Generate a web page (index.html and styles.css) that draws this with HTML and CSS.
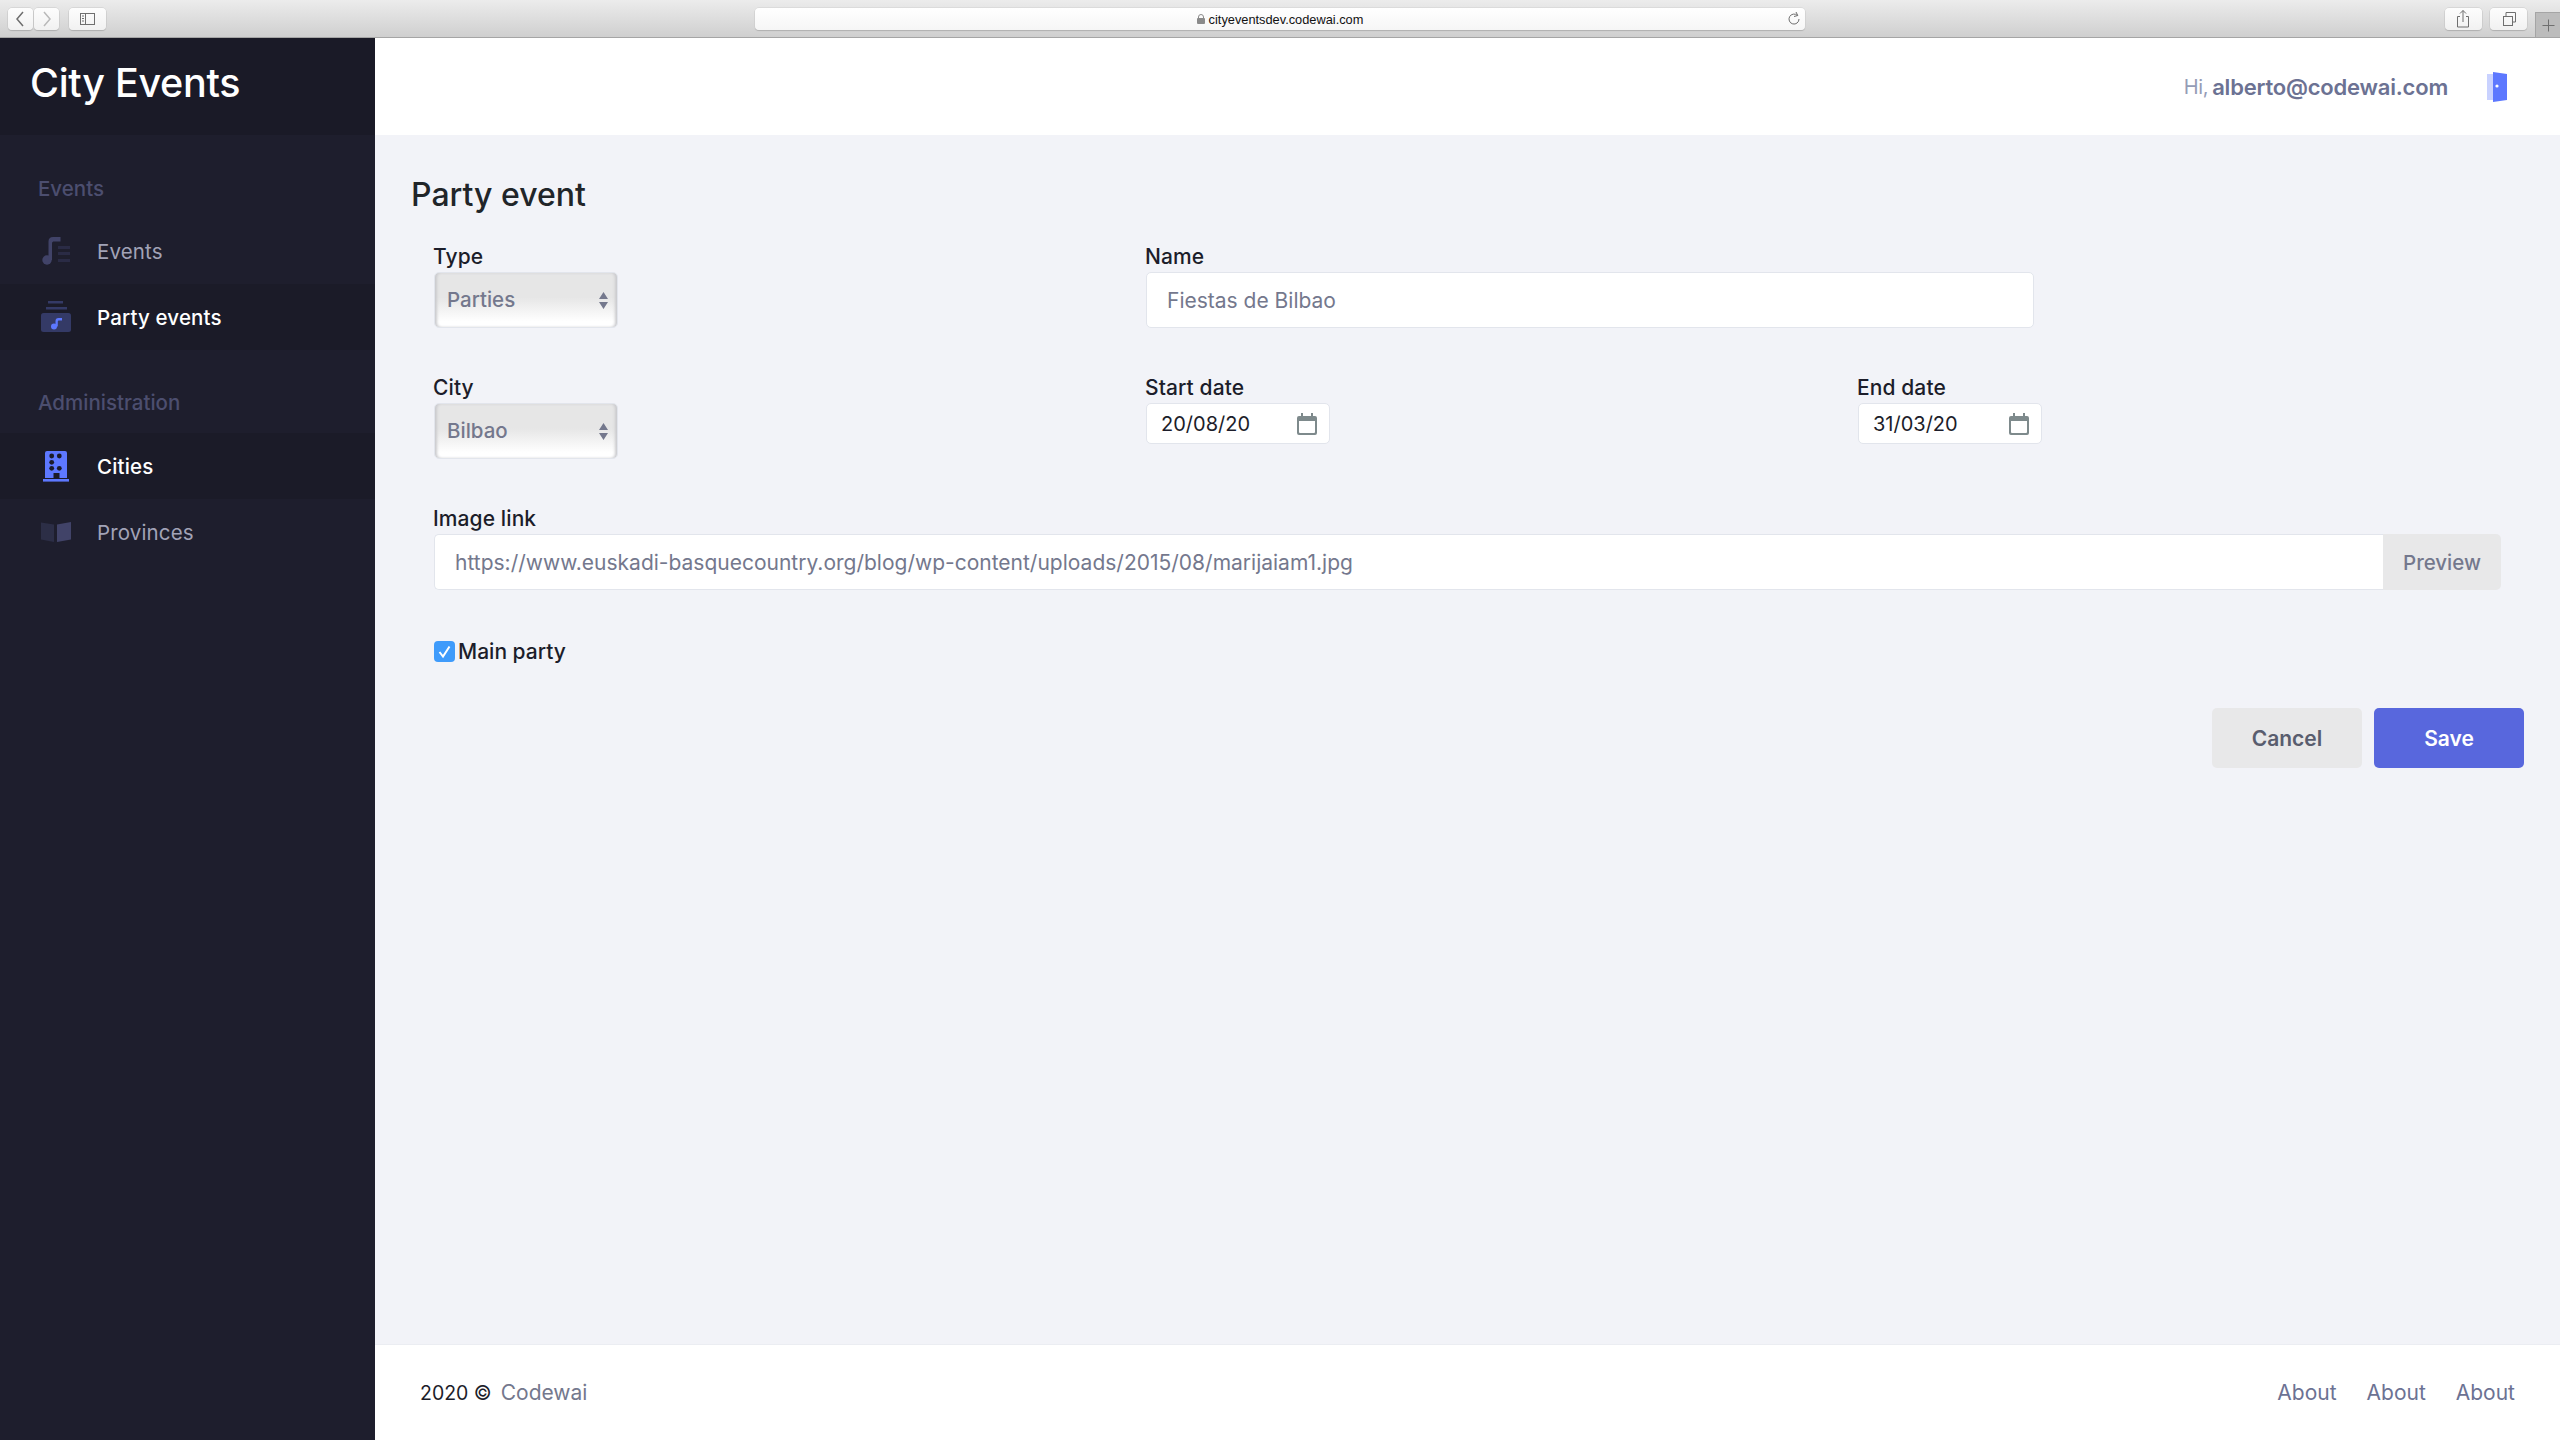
FILE: index.html
```html
<!DOCTYPE html>
<html lang="en">
<head>
<meta charset="utf-8">
<title>City Events</title>
<link rel="stylesheet" href="styles.css">
</head>
<body>
<div class="chrome">
  <div class="chrome-group">
    <div class="cbtn cbtn-nav"><svg width="25" height="22" viewBox="0 0 25 22"><path d="M15 4 L9 11 L15 18" class="cstroke"/></svg></div>
    <div class="cbtn cbtn-nav cbtn-next"><svg width="25" height="22" viewBox="0 0 25 22"><path d="M10 4 L16 11 L10 18" class="cstroke cstroke-dim"/></svg></div>
    <div class="cbtn cbtn-wide cbtn-side"><svg width="37" height="22" viewBox="0 0 37 22"><rect x="11.5" y="5.5" width="14" height="11" class="cthin"/><path d="M16.5 5.5V16.5M13 8H15M13 10.500H15M13 13H15" class="cthin"/></svg></div>
  </div>
  <div class="address">
    <svg class="lock" width="8" height="10" viewBox="0 0 8 10"><path d="M1.500 4.500V3a2.500 2.500 0 0 1 5 0v1.500" class="lock-s"/><rect y="4" width="8" height="6" rx="1" class="lock-f"/></svg>
    <span class="url">cityeventsdev.codewai.com</span>
    <svg class="reload" width="12" height="15" viewBox="0 0 12 15"><path d="M9.500 4.500A5 5 0 1 0 11 8M8 1l1.800 3.500L6 5.500" class="cthin"/></svg>
  </div>
  <div class="chrome-group chrome-right">
    <div class="cbtn cbtn-wide"><svg width="37" height="22" viewBox="0 0 37 22"><path d="M15 8.500H12.500V19H23.500V8.500H21M18 14V2.500M15 5.500L18 2.500L21 5.500" class="cthin"/></svg></div>
    <div class="cbtn cbtn-wide cbtn-tabs"><svg width="37" height="22" viewBox="0 0 37 22"><rect x="13.500" y="8.500" width="9" height="9" class="cthin"/><path d="M16 8V4.500H25.500V14H23" class="cthin"/></svg></div>
    <div class="newtab"><svg width="25" height="25" viewBox="0 0 25 25"><path d="M12.500 6.500V18.500M6.500 12.500H18.500" class="cthin"/></svg></div>
  </div>
</div>
<div class="app">
  <aside class="sidebar">
    <div class="brand">City Events</div>
    <nav class="menu">
      <div class="section section-first">Events</div>
      <a class="item">
        <svg class="ico" viewBox="0 0 32 32"><g class="i-main"><circle cx="7" cy="25" r="4.700"/><path d="M8.500 25V6.500C8.500 3.500 10 2 13 2H20.500V6.500H14C12.800 6.500 12 7 12 8.500V25Z"/></g><g class="i-dim"><rect x="18" y="11" width="12" height="3"/><rect x="18" y="17" width="12" height="3"/><rect x="18" y="24" width="12" height="3"/></g></svg>
        <span>Events</span>
      </a>
      <a class="item active">
        <svg class="ico" viewBox="0 0 32 32"><g class="i-soft"><rect x="8" y="0" width="15" height="2.500"/><rect x="6" y="6" width="21" height="2.500"/><rect x="1" y="12" width="30" height="19" rx="2.500"/></g><g class="i-blue"><circle cx="14" cy="25.500" r="3"/><path d="M15.500 25.500V20C15.500 18 16.500 17 18.500 17H22V19.500H19C18 19.500 17.800 20 17.800 21V25.500Z"/></g></svg>
        <span>Party events</span>
      </a>
      <div class="section">Administration</div>
      <a class="item active">
        <svg class="ico" viewBox="0 0 32 32"><g class="i-blue"><path d="M7 1H25A2 2 0 0 1 27 3V28H19.500V23H13.500V28H5V3A2 2 0 0 1 7 1Z"/><rect x="3" y="29" width="26" height="2.600"/></g><g class="i-hole"><circle cx="11.700" cy="6" r="2.400"/><circle cx="19.300" cy="6" r="2.400"/><circle cx="11.700" cy="12.300" r="2.400"/><circle cx="11.700" cy="18.300" r="2.400"/><circle cx="19.300" cy="18.300" r="2.400"/></g></svg>
        <span>Cities</span>
      </a>
      <a class="item">
        <svg class="ico" viewBox="0 0 32 32"><path class="i-book-l" d="M1 6.500L14 8.500V26L1 23.500Z"/><path class="i-book-r" d="M17 8.500L31 6V23.500L17 26Z"/></svg>
        <span>Provinces</span>
      </a>
    </nav>
  </aside>
  <main class="main">
    <header class="topbar">
      <span class="hi">Hi,</span>
      <span class="email">alberto@codewai.com</span>
      <svg class="door" width="20" height="30" viewBox="0 0 20 30"><rect x="0" y="2" width="7" height="26" class="door-back"/><path d="M6 0L20 2V28L6 30Z" class="door-front"/><circle cx="10" cy="14" r="1.600" class="door-knob"/></svg>
    </header>
    <section class="content">
      <h1 class="title">Party event</h1>
      <div class="form">
        <div class="field">
          <div class="label">Type</div>
          <div class="select"><span>Parties</span><svg class="updown" width="9" height="17" viewBox="0 0 9 17"><path d="M4.500 0L9 7H0ZM0 10H9L4.500 17Z"/></svg></div>
        </div>
        <div class="field field-name">
          <div class="label">Name</div>
          <div class="input">Fiestas de Bilbao</div>
        </div>
        <div class="field-spacer"></div>
        <div class="field">
          <div class="label">City</div>
          <div class="select"><span>Bilbao</span><svg class="updown" width="9" height="17" viewBox="0 0 9 17"><path d="M4.500 0L9 7H0ZM0 10H9L4.500 17Z"/></svg></div>
        </div>
        <div class="field">
          <div class="label">Start date</div>
          <div class="date"><span>20/08/20</span><svg class="cal" width="20" height="22" viewBox="0 0 20 22"><path d="M4 0H6V3H14V0H16V3H18A2 2 0 0 1 20 5V20A2 2 0 0 1 18 22H2A2 2 0 0 1 0 20V5A2 2 0 0 1 2 3H4ZM2 8V19A1 1 0 0 0 3 20H17A1 1 0 0 0 18 19V8Z"/></svg></div>
        </div>
        <div class="field">
          <div class="label">End date</div>
          <div class="date"><span>31/03/20</span><svg class="cal" width="20" height="22" viewBox="0 0 20 22"><path d="M4 0H6V3H14V0H16V3H18A2 2 0 0 1 20 5V20A2 2 0 0 1 18 22H2A2 2 0 0 1 0 20V5A2 2 0 0 1 2 3H4ZM2 8V19A1 1 0 0 0 3 20H17A1 1 0 0 0 18 19V8Z"/></svg></div>
        </div>
        <div class="field field-full">
          <div class="label">Image link</div>
          <div class="group">
            <div class="input input-grow">https://www.euskadi-basquecountry.org/blog/wp-content/uploads/2015/08/marijaiam1.jpg</div>
            <div class="addon">Preview</div>
          </div>
        </div>
      </div>
      <div class="check-row">
        <svg class="check" width="21" height="21" viewBox="0 0 21 21"><rect width="21" height="21" rx="4" class="check-box"/><path d="M5.500 11L9 15.500L15.500 5.500" class="check-mark"/></svg>
        <span>Main party</span>
      </div>
      <div class="actions">
        <div class="btn btn-cancel">Cancel</div>
        <div class="btn btn-save">Save</div>
      </div>
    </section>
    <footer class="footer">
      <div class="copy"><span class="year">2020 ©</span><span class="owner">Codewai</span></div>
      <div class="links"><span>About</span><span>About</span><span>About</span></div>
    </footer>
  </main>
</div>
</body>
</html>
```
FILE: styles.css
```css
* { box-sizing: border-box; }
html, body { margin: 0; height: 100%; }
body {
  display: flex;
  flex-direction: column;
  height: 1440px;
  overflow: hidden;
  font-family: "Inter", "Noto Sans", sans-serif;
  background: #f2f3f8;
}

/* browser chrome */
.chrome {
  height: 38px;
  flex: none;
  display: flex;
  justify-content: space-between;
  background: linear-gradient(#ececec, #cfcfcf);
  border-bottom: 1px solid #a5a5a5;
}
.chrome-group { display: flex; padding: 8px 0 0 8px; width: 755px; }
.chrome-right { justify-content: flex-end; padding: 8px 0 0 0; }
.cbtn {
  height: 22px;
  background: linear-gradient(#fdfdfd, #f1f1f1);
  border-radius: 4px;
  box-shadow: 0 1px 1px #b0b0b0, 0 0 0 .5px #c8c8c8;
}
.cbtn-nav { width: 25px; }
.cbtn-next { margin-left: 1px; }
.cbtn-wide { width: 37px; }
.cbtn-side { margin-left: 10px; }
.cbtn-tabs { margin-left: 8px; }
.cbtn svg, .newtab svg { display: block; }
.cstroke { fill: none; stroke: #6d6d6d; stroke-width: 1.5; }
.cstroke-dim { stroke: #b9b9b9; }
.cthin { fill: none; stroke: #6f6f6f; stroke-width: 1; }
.newtab {
  width: 25px;
  height: 25px;
  margin: 4px 0 0 8px;
  background: #bcbcbc;
  border-left: 1px solid #a5a5a5;
  border-top: 1px solid #a5a5a5;
}
.address {
  width: 1050px;
  height: 22px;
  margin-top: 8px;
  position: relative;
  display: flex;
  align-items: center;
  justify-content: center;
  gap: 4px;
  background: linear-gradient(#ffffff, #f6f6f6);
  border-radius: 4px;
  box-shadow: 0 1px 1px #b0b0b0, 0 0 0 .5px #cfcfcf;
}
.url { font: 12.8px "Liberation Sans", sans-serif; color: #111; }
.lock-s { fill: none; stroke: #8a8a8a; stroke-width: 1; }
.lock-f { fill: #8a8a8a; }
.reload { position: absolute; right: 5px; top: 3px; }

/* layout */
.app { flex: 1; display: flex; min-height: 0; }
.sidebar { width: 375px; flex: none; background: #1e1e2d; }
.brand {
  height: 97px;
  padding: 20px 0 0 30px;
  background: #1a1a27;
  color: #fff;
  font-size: 39.5px;
  line-height: 50px;
  font-weight: 500;
  letter-spacing: -.3px;
}
.menu { padding-top: 34px; }
.section {
  height: 40px;
  margin: 33px 0 10px;
  padding-left: 38px;
  line-height: 40px;
  font-size: 20.5px;
  font-weight: 500;
  color: #4c4e6f;
}
.section-first { margin: 0 0 9px; }
.item {
  height: 66px;
  display: flex;
  align-items: center;
  gap: 25px;
  padding-left: 40px;
  color: #a2a3b7;
  font-size: 20.5px;
  letter-spacing: .15px;
}
.item.active { background: #1b1b28; color: #fff; font-weight: 500; }
.ico { width: 32px; height: 32px; flex: none; }
.i-main { fill: #414368; }
.i-dim { fill: #2a2b45; }
.i-soft { fill: #343a66; }
.i-blue { fill: #5d78ff; }
.i-hole { fill: #1b1b28; }
.i-book-l { fill: #2c2e46; }
.i-book-r { fill: #414368; }

.main { flex: 1; min-width: 0; display: flex; flex-direction: column; }
.topbar {
  height: 97px;
  flex: none;
  display: flex;
  align-items: center;
  justify-content: flex-end;
  padding-right: 53px;
  background: #fff;
  font-size: 22px;
  letter-spacing: -.2px;
}
.hi { color: #959cb6; margin-right: 4px; font-size: 20px; letter-spacing: -.4px; }
.email { color: #6c7293; font-weight: 600; }
.door { margin-left: 39px; }
.door-back { fill: #c9d2ff; }
.door-front { fill: #5d78ff; }
.door-knob { fill: #fff; }

.content { flex: 1; padding: 0 36px; min-height: 0; }
.title {
  margin: 0;
  padding-top: 35px;
  height: 111px;
  font-size: 32px;
  line-height: 50px;
  font-weight: 500;
  color: #212529;
}
.form {
  display: grid;
  grid-template-columns: 712px 712px 1fr;
  row-gap: 49px;
  padding: 0 23px;
}
.field-full { grid-column: 1 / -1; }
.label {
  height: 26px;
  margin-left: -1px;
  font-size: 21px;
  line-height: 22px;
  font-weight: 500;
  letter-spacing: .1px;
  color: #1c1d2a;
}
.select {
  width: 184px;
  height: 56px;
  display: flex;
  align-items: center;
  justify-content: space-between;
  padding: 0 9px 2px 12px;
  border: 1px solid #e2e5ec;
  border-radius: 5px;
  background: linear-gradient(#e6e6e6 0, #e6e6e6 45%, #ffffff 90%);
  box-shadow: inset 3px 0 3px -1px #c9c9cd, inset -3px 0 3px -1px #c9c9cd;
  color: #74788d;
  font-size: 20.5px;
  font-weight: 500;
}
.updown { fill: #74788d; margin-top: 2px; }
.input {
  height: 56px;
  display: flex;
  align-items: center;
  padding-left: 20px;
  background: #fff;
  border: 1px solid #e2e5ec;
  border-radius: 5px;
  color: #74788d;
  font-size: 21px;
}
.field-name { width: 888px; }
.date {
  width: 184px;
  height: 41px;
  display: flex;
  align-items: center;
  justify-content: space-between;
  padding: 0 12px 0 14px;
  background: #fff;
  border: 1px solid #e2e5ec;
  border-radius: 5px;
  color: #1c1d2a;
  font-size: 20px;
}
.cal { fill: #7e8a8c; flex: none; }
.group { display: flex; }
.input-grow { flex: 1; border-radius: 5px 0 0 5px; border-right: 0; }
.addon {
  width: 118px;
  height: 56px;
  display: flex;
  align-items: center;
  justify-content: center;
  background: #e8e8e9;
  border-radius: 0 5px 5px 0;
  color: #74788d;
  font-size: 20.5px;
  font-weight: 500;
}
.check-row {
  display: flex;
  align-items: center;
  gap: 3px;
  margin: 51px 0 0 23px;
  height: 21px;
  font-size: 21px;
  font-weight: 500;
  color: #1c1d2a;
}
.check { flex: none; }
.check-box { fill: #3f9bfb; }
.check-mark { fill: none; stroke: #fff; stroke-width: 2; }
.actions { display: flex; justify-content: flex-end; gap: 12px; margin-top: 46px; }
.btn {
  width: 150px;
  height: 60px;
  display: flex;
  align-items: center;
  justify-content: center;
  border-radius: 5px;
  font-size: 21px;
  font-weight: 600;
}
.btn-cancel { background: #e8e8e9; color: #595d6e; }
.btn-save { background: #5867dd; color: #fff; }
.footer {
  height: 96px;
  flex: none;
  display: flex;
  align-items: center;
  justify-content: space-between;
  padding: 0 45px;
  background: #fff;
  border-top: 1px solid #ebedf2;
  font-size: 21px;
}
.copy { display: flex; align-items: center; gap: 9px; }
.year { color: #1c1d2a; font-size: 19.5px; font-weight: 400; }
.owner { color: #74788d; font-size: 21px; }
.links { display: flex; gap: 30px; color: #6c7293; }
```
